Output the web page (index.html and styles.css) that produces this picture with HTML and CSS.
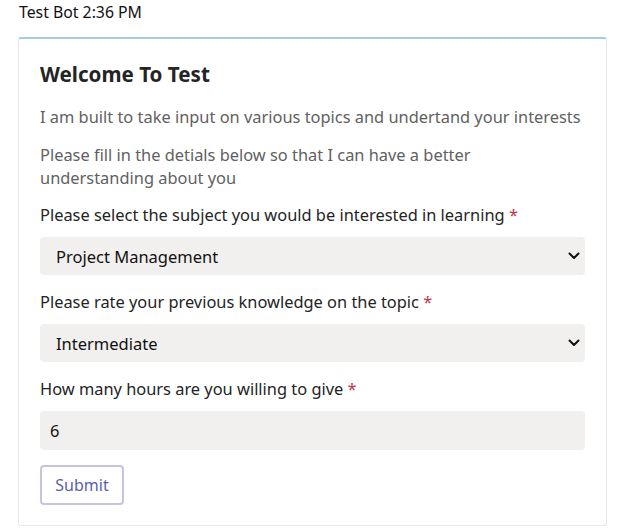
FILE: index.html
```html
<!DOCTYPE html>
<html>
<head>
<meta charset="utf-8">
<link rel="stylesheet" href="styles.css">
</head>
<body>
<div class="meta">Test Bot 2:36 PM</div>
<div class="card">
  <h1 class="title">Welcome To Test</h1>
  <p class="desc">I am built to take input on various topics and undertand your interests</p>
  <p class="desc">Please fill in the detials below so that I can have a better<br>understanding about you</p>
  <div class="field">
    <label class="label">Please select the subject you would be interested in learning <span class="req">*</span></label>
    <div class="select"><span>Project Management</span>
      <svg class="chev" width="12" height="8" viewBox="0 0 12 8"><path d="M1.5 1.5 L6 6 L10.5 1.5" fill="none" stroke="#111" stroke-width="2" stroke-linecap="round" stroke-linejoin="round"/></svg>
    </div>
  </div>
  <div class="field">
    <label class="label">Please rate your previous knowledge on the topic <span class="req">*</span></label>
    <div class="select"><span>Intermediate</span>
      <svg class="chev" width="12" height="8" viewBox="0 0 12 8"><path d="M1.5 1.5 L6 6 L10.5 1.5" fill="none" stroke="#111" stroke-width="2" stroke-linecap="round" stroke-linejoin="round"/></svg>
    </div>
  </div>
  <div class="field">
    <label class="label">How many hours are you willing to give <span class="req">*</span></label>
    <div class="input">6</div>
  </div>
  <button class="submit">Submit</button>
</div>
</body>
</html>
```
FILE: styles.css
```css
* { box-sizing: border-box; }
body {
  margin: 0;
  padding: 0 19px 0 18px;
  font-family: "Noto Sans", "Open Sans", sans-serif;
  color: #242424;
  background: #fff;
}
.meta {
  font-size: 15.8px;
  line-height: 22px;
  padding-top: 1px;
  padding-left: 1px;
  color: #111;
  margin-bottom: 14px;
}
.card {
  width: 589px;
  border: 1px solid #e8e8e8;
  border-top: 2px solid #a6c9ee;
  border-radius: 3px;
  padding: 20px 21px 20px 21px;
}
.title {
  margin: 0 0 16px;
  font-size: 20.6px;
  line-height: 30px;
  font-weight: 700;
  color: #242424;
}
.desc {
  margin: 0 0 15px;
  font-size: 16.4px;
  line-height: 23px;
  color: #616161;
}
.label {
  display: block;
  font-size: 16.4px;
  line-height: 22px;
  color: #242424;
  margin-bottom: 11px;
}
.req { color: #c4314b; }
.select, .input {
  height: 38px;
  background: #f1f0ef;
  border-radius: 4px;
  display: flex;
  align-items: center;
  justify-content: space-between;
  font-size: 16.5px;
  color: #111;
  margin-bottom: 16px;
}
.select { padding: 0 5px 0 16px; }
.input { padding: 0 12px 0 10px; height: 39px; margin-bottom: 15px; }
.chev { display: block; }
.submit {
  display: block;
  width: 84px;
  height: 40px;
  border: 2px solid #c5c5de;
  border-radius: 4px;
  background: #fff;
  color: #5b5fa7;
  font-family: inherit;
  font-size: 16px;
  padding: 0;
}
```
